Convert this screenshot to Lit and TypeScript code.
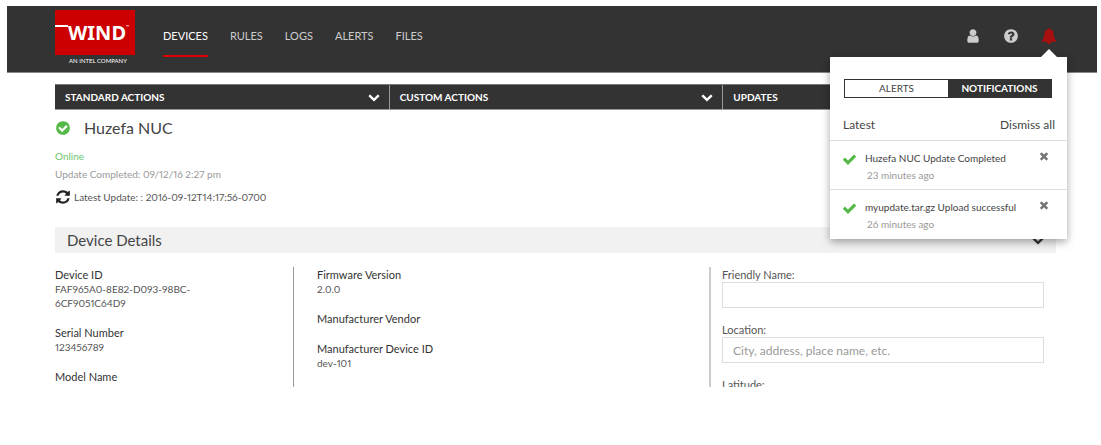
import { LitElement, html, css, svg } from "lit";
import { customElement, state } from "lit/decorators.js";

const DISC =
  "M1664 896q0 209-103 385.5t-279.5 279.5-385.5 103-385.5-103-279.5-279.5-103-385.5 103-385.5 279.5-279.5 385.5-103 385.5 103 279.5 279.5 103 385.5z";

const ICONS: Record<string, string> = {
  user: "M1536 1399q0 109-62.5 187t-150.5 78h-854q-88 0-150.5-78t-62.5-187q0-85 8.5-160.5t31.5-152 58.5-131 94-89 134.5-34.5q131 128 313 128t313-128q76 0 134.5 34.5t94 89 58.5 131 31.5 152 8.5 160.5zm-256-887q0 159-112.5 271.5t-271.5 112.5-271.5-112.5-112.5-271.5 112.5-271.5 271.5-112.5 271.5 112.5 112.5 271.5z",
  help:
    "M1024 1376v-192q0-14-9-23t-23-9h-192q-14 0-23 9t-9 23v192q0 14 9 23t23 9h192q14 0 23-9t9-23zm256-672q0-88-55.5-163t-138.5-116-170-41q-243 0-371 213-15 24 8 42l132 100q7 6 19 6 16 0 25-12 53-68 86-92 34-24 86-24 48 0 85.5 26t37.5 59q0 38-20 61t-68 45q-63 28-115.5 86.5t-52.5 125.5v36q0 14 9 23t23 9h192q14 0 23-9t9-23q0-19 21.5-49.5t54.5-49.5q32-18 49-28.5t46-35 44.5-48 28-60.5 12.5-81z" +
    DISC,
  bell: "M1728 1408q0 52-38 90t-90 38h-448q0 106-75 181t-181 75-181-75-75-181h-448q-52 0-90-38t-38-90q50-42 91-88t85-119.5 74.5-158.5 50-206 19.5-260q0-152 117-282.5t307-158.5q-8-19-8-39 0-40 28-68t68-28 68 28 28 68q0 20-8 39 190 28 307 158.5t117 282.5q0 139 19.5 260t50 206 74.5 158.5 85 119.5 91 88z",
  check:
    "M1671 566q0 40-28 68l-724 724-136 136q-28 28-68 28t-68-28l-136-136-362-362q-28-28-28-68t28-68l136-136q28-28 68-28t68 28l294 295 656-657q28-28 68-28t68 28l136 136q28 28 28 68z",
  times:
    "M1490 1322q0 40-28 68l-136 136q-28 28-68 28t-68-28l-294-294-294 294q-28 28-68 28t-68-28l-136-136q-28-28-28-68t28-68l294-294-294-294q-28-28-28-68t28-68l136-136q28-28 68-28t68 28l294 294 294-294q28-28 68-28t68 28l136 136q28 28 28 68t-28 68l-294 294 294 294q28 28 28 68z",
  checkCircle:
    "M1412 734q0-28-18-46l-91-90q-19-19-45-19t-45 19l-408 407-226-226q-19-19-45-19t-45 19l-91 90q-18 18-18 46 0 27 18 45l362 362q19 19 45 19 27 0 46-19l543-543q18-18 18-45z" +
    DISC,
  refresh:
    "M1639 1056q0 5-1 7-64 268-268 434.5t-478 166.5q-146 0-282.5-55t-243.5-157l-129 129q-19 19-45 19t-45-19-19-45v-448q0-26 19-45t45-19h448q26 0 45 19t19 45-19 45l-137 137q71 66 161 102t187 36q134 0 250-65t186-179q11-17 53-117 8-23 30-23h192q13 0 22.5 9.5t9.5 22.5zm25-800v448q0 26-19 45t-45 19h-448q-26 0-45-19t-19-45 19-45l138-138q-148-137-349-137-134 0-250 65t-186 179q-11 17-53 117-8 23-30 23h-199q-13 0-22.5-9.5t-9.5-22.5v-7q65-268 270-434.5t480-166.5q146 0 284 55.5t245 156.5l130-129q19-19 45-19t45 19 19 45z",
  chevron:
    "M1683 808l-742 741q-19 19-45 19t-45-19l-742-741q-19-19-19-45.5t19-45.5l166-165q19-19 45-19t45 19l531 531 531-531q19-19 45-19t45 19l166 165q19 19 19 45.5t-19 45.5z",
};

const icon = (name: string) => html`<svg class="icon" viewBox="0 0 1792 1792" aria-hidden="true">
  ${svg`<path fill-rule="evenodd" d=${ICONS[name]}></path>`}
</svg>`;

const NAV = ["DEVICES", "RULES", "LOGS", "ALERTS", "FILES"];
const ACTIONS = ["STANDARD ACTIONS", "CUSTOM ACTIONS", "UPDATES"];
const NOTES = [
  { text: "Huzefa NUC Update Completed", ago: "23 minutes ago" },
  { text: "myupdate.tar.gz Upload successful", ago: "26 minutes ago" },
];
const IDENTITY = [
  ["Device ID", "FAF965A0-8E82-D093-98BC-6CF9051C64D9"],
  ["Serial Number", "123456789"],
  ["Model Name", ""],
];
const MAKER = [
  ["Firmware Version", "2.0.0"],
  ["Manufacturer Vendor", ""],
  ["Manufacturer Device ID", "dev-101"],
];

@customElement("notification-panel")
export class NotificationPanel extends LitElement {
  @state() tab = "NOTIFICATIONS";

  static styles = css`
    :host {
      display: block;
      box-sizing: border-box;
      background: #fff;
      color: #444;
      box-shadow: 0 3px 8px rgba(0, 0, 0, 0.35);
      font-size: 10px;
    }
    :host::before {
      content: "";
      position: absolute;
      top: -8px;
      right: 10px;
      border: 8px solid transparent;
      border-top: 0;
      border-bottom-color: #fff;
    }
    button {
      font: inherit;
      color: inherit;
      background: none;
      border: 0;
      padding: 0;
      cursor: pointer;
    }
    .tabs {
      display: flex;
      margin: 22px 15px 0 14px;
      border: 1px solid #333;
    }
    .tabs button {
      flex: 1;
      line-height: 17px;
    }
    .tabs button.on {
      background: #333;
      color: #fff;
      font-weight: 700;
    }
    .head {
      display: flex;
      justify-content: space-between;
      padding: 17px 12px 5px 13px;
      font-size: 12px;
      line-height: 20px;
    }
    ul {
      list-style: none;
      margin: 0;
      padding: 0 0 1px;
    }
    li {
      display: grid;
      grid-template-columns: 15px 1fr 12px;
      column-gap: 8px;
      padding: 9px 17px 5px 12px;
      border-top: 1px solid #ddd;
      line-height: 17px;
    }
    p {
      margin: 0;
      white-space: nowrap;
    }
    .ago {
      color: #999;
      padding-left: 2px;
    }
    .icon {
      display: block;
      width: 100%;
      fill: currentColor;
    }
    .ok {
      color: #55b948;
      padding-top: 2px;
    }
    .close {
      align-self: start;
      color: #777;
    }
  `;

  render() {
    return html`
      <div class="tabs" role="tablist">
        ${["ALERTS", "NOTIFICATIONS"].map(
          (t) => html`<button role="tab" class=${t === this.tab ? "on" : ""} aria-selected=${t === this.tab}
            @click=${() => (this.tab = t)}>${t}</button>`
        )}
      </div>
      <div class="head"><span>Latest</span><button>Dismiss all</button></div>
      <ul>
        ${NOTES.map(
          (n) => html`<li>
            <span class="ok">${icon("check")}</span>
            <div><p>${n.text}</p><p class="ago">${n.ago}</p></div>
            <button class="close" aria-label="Dismiss">${icon("times")}</button>
          </li>`
        )}
      </ul>
    `;
  }
}

@customElement("app-root")
export class AppRoot extends LitElement {
  static styles = css`
    :host {
      display: flex;
      flex-direction: column;
      box-sizing: border-box;
      height: 100vh;
      padding: 6px 4px 58px 7px;
      background: #fff;
      color: #555;
      font: 10px/14px Lato, "Open Sans", sans-serif;
      font-variant-numeric: proportional-nums;
    }
    a {
      color: inherit;
      text-decoration: none;
    }
    button {
      font: inherit;
      color: inherit;
      background: none;
      border: 0;
      padding: 0;
      cursor: pointer;
    }
    .icon {
      display: block;
      width: 100%;
      fill: currentColor;
    }
    header {
      display: flex;
      flex: none;
      align-items: flex-start;
      padding: 0 40px 0 48px;
      background: #333;
      border-bottom: 1px solid #888;
      color: #ccc;
    }
    .brand {
      width: 80px;
      padding: 4px 0 5px;
      text-align: center;
      color: #fff;
    }
    .mark {
      display: flex;
      height: 45px;
      background: #c00;
      font: 700 20px/45px "Noto Sans", sans-serif;
    }
    .mark::before {
      content: "";
      width: 13px;
      height: 2px;
      margin-top: 15px;
      background: #fff;
    }
    .mark sup {
      font-size: 4px;
      line-height: 34px;
    }
    .tagline {
      display: block;
      padding-left: 6px;
      font-size: 6px;
      line-height: 12px;
      white-space: nowrap;
    }
    nav {
      display: flex;
      gap: 22px;
      margin: 20px auto 0 28px;
      font-size: 11px;
      line-height: 20px;
    }
    nav a {
      padding-bottom: 9px;
      border-bottom: 2px solid transparent;
    }
    nav a.on {
      color: #fff;
      border-color: #e00000;
    }
    .tools {
      display: flex;
      gap: 22px;
      padding-top: 22px;
    }
    .tools button {
      display: block;
      width: 16px;
    }
    .bell {
      position: relative;
      color: #a80f0f;
    }
    notification-panel {
      position: absolute;
      z-index: 2;
      top: 29px;
      right: -10px;
      width: 237px;
    }
    main {
      display: flex;
      flex-direction: column;
      flex: 1;
      min-height: 0;
      padding: 11px 41px 0 48px;
    }
    .actions {
      display: grid;
      flex: none;
      grid-template-columns: repeat(3, 1fr);
      background: #333;
      color: #fff;
      border-top: 1px solid #777;
      border-bottom: 1px solid #999;
      font-weight: 700;
    }
    .actions button {
      display: flex;
      justify-content: space-between;
      align-items: center;
      padding: 0 9px 0 10px;
      line-height: 24px;
    }
    .actions button + button {
      border-left: 1px solid #999;
    }
    .actions .icon {
      width: 12px;
    }
    .title {
      display: flex;
      align-items: center;
      gap: 13px;
      margin: 6px 0 8px;
    }
    h1,
    h2 {
      margin: 0;
      font-size: 16px;
      line-height: 24px;
      font-weight: 400;
      color: #444;
    }
    h2 {
      font-size: 15px;
    }
    .state {
      width: 16px;
      color: #55b948;
    }
    p {
      margin: 0;
    }
    .online {
      color: #6cc56c;
      line-height: 16px;
    }
    .done {
      color: #999;
      line-height: 20px;
    }
    .latest {
      display: flex;
      align-items: center;
      gap: 3px;
      padding-top: 3px;
      line-height: 20px;
    }
    .sync {
      width: 16px;
      color: #222;
    }
    .band {
      display: flex;
      flex: none;
      justify-content: space-between;
      align-items: center;
      margin: 20px 0 14px;
      padding: 1px 12px;
      background: #f1f1f1;
    }
    .band button {
      width: 12px;
      color: #333;
    }
    .details {
      display: grid;
      grid-template-columns: 239fr 417fr 345fr;
      grid-template-rows: minmax(0, 1fr);
      flex: 1;
      min-height: 0;
      overflow: hidden;
    }
    dl {
      margin: 0;
      padding-right: 90px;
      border-right: 1px solid #999;
    }
    dl + dl {
      padding-left: 23px;
      border-right: 2px solid #ccc;
    }
    dt {
      font-size: 11px;
      line-height: 15px;
      color: #333;
    }
    dd {
      margin: 0;
    }
    dl > div + div {
      margin-top: 15px;
    }
    form {
      padding: 0 12px 0 11px;
    }
    label {
      display: block;
      font-size: 11px;
      line-height: 15px;
    }
    input {
      display: block;
      box-sizing: border-box;
      width: 100%;
      height: 26px;
      margin: 0 0 14px;
      padding: 0 10px;
      border: 1px solid #ddd;
      font: inherit;
      font-size: 12px;
      color: #444;
    }
    input::placeholder {
      color: #999;
      opacity: 1;
    }
  `;

  private list(rows: string[][]) {
    return html`<dl>
      ${rows.map(([k, v]) => html`<div><dt>${k}</dt>${v ? html`<dd>${v}</dd>` : ""}</div>`)}
    </dl>`;
  }

  render() {
    return html`
      <header>
        <a class="brand" href="#">
          <span class="mark">WIND<sup>™</sup></span>
          <span class="tagline">AN INTEL COMPANY</span>
        </a>
        <nav>${NAV.map((n, i) => html`<a href="#" class=${i === 0 ? "on" : ""}>${n}</a>`)}</nav>
        <div class="tools">
          <button aria-label="Account">${icon("user")}</button>
          <button aria-label="Help">${icon("help")}</button>
          <div class="bell">
            <button aria-label="Notifications">${icon("bell")}</button>
            <notification-panel></notification-panel>
          </div>
        </div>
      </header>
      <main>
        <div class="actions">
          ${ACTIONS.map((a) => html`<button><span>${a}</span>${icon("chevron")}</button>`)}
        </div>
        <div class="title"><span class="state">${icon("checkCircle")}</span><h1>Huzefa NUC</h1></div>
        <p class="online">Online</p>
        <p class="done">Update Completed: 09/12/16 2:27 pm</p>
        <p class="latest"><span class="sync">${icon("refresh")}</span>Latest Update: : 2016-09-12T14:17:56-0700</p>
        <div class="band">
          <h2>Device Details</h2>
          <button aria-label="Collapse">${icon("chevron")}</button>
        </div>
        <section class="details">
          ${this.list(IDENTITY)} ${this.list(MAKER)}
          <form>
            <label for="name">Friendly Name:</label>
            <input id="name" type="text" />
            <label for="place">Location:</label>
            <input id="place" type="text" placeholder="City, address, place name, etc." />
            <label for="lat">Latitude:</label>
            <input id="lat" type="text" />
          </form>
        </section>
      </main>
    `;
  }
}
